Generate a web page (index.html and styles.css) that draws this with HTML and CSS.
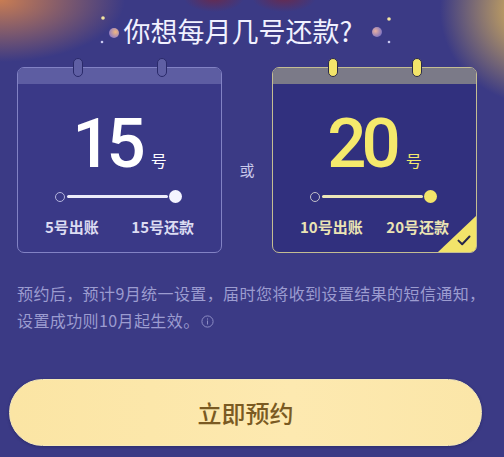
FILE: index.html
```html
<!DOCTYPE html>
<html lang="zh-CN">
<head>
    <meta charset="UTF-8">
    <meta name="viewport" content="width=device-width, initial-scale=1.0">
    <title>还款日设置</title>
    <link rel="stylesheet" href="styles.css">
</head>
<body>
    <div class="page">
        <div class="title">
            <svg class="deco" width="24" height="34" viewBox="0 0 24 34">
                <defs>
                    <radialGradient id="orbL" cx="0.65" cy="0.4" r="0.7">
                        <stop offset="0" stop-color="#f2b880"/>
                        <stop offset="1" stop-color="#8a78c8"/>
                    </radialGradient>
                </defs>
                <circle cx="5" cy="4" r="1.8" fill="#f4e6a0"/>
                <circle cx="16" cy="19" r="5" fill="url(#orbL)"/>
                <circle cx="4" cy="28" r="1.3" fill="#c8c8f0"/>
            </svg>
            <h1>你想每月几号还款?</h1>
            <svg class="deco" width="40" height="34" viewBox="0 0 40 34">
                <defs>
                    <radialGradient id="orbR" cx="0.35" cy="0.4" r="0.7">
                        <stop offset="0" stop-color="#e8b0a0"/>
                        <stop offset="1" stop-color="#7a70c0"/>
                    </radialGradient>
                </defs>
                <circle cx="35" cy="5" r="1.8" fill="#f4e6a0"/>
                <circle cx="23" cy="18" r="5" fill="url(#orbR)"/>
                <circle cx="35" cy="28" r="1.3" fill="#c8c8f0"/>
            </svg>
        </div>

        <div class="choices">
            <div class="card">
                <span class="ring ring-a"></span>
                <span class="ring ring-b"></span>
                <div class="card-head"></div>
                <div class="day"><span class="num">15</span><span class="unit">号</span></div>
                <div class="track"><span class="dot-open"></span><span class="bar"></span><span class="dot-full"></span></div>
                <div class="labels"><span>5号出账</span><span>15号还款</span></div>
            </div>

            <div class="or">或</div>

            <div class="card active">
                <span class="ring ring-a"></span>
                <span class="ring ring-b"></span>
                <div class="card-head"></div>
                <div class="day"><span class="num">20</span><span class="unit">号</span></div>
                <div class="track"><span class="dot-open"></span><span class="bar"></span><span class="dot-full"></span></div>
                <div class="labels"><span>10号出账</span><span>20号还款</span></div>
                <span class="picked">
                    <svg width="14" height="11" viewBox="0 0 14 11">
                        <path d="M1.5 5.6 L5.2 9.2 L12.5 1.5" fill="none" stroke="#26264a" stroke-width="2" stroke-linecap="round" stroke-linejoin="round"/>
                    </svg>
                </span>
            </div>
        </div>

        <p class="notice">预约后，预计9月统一设置，届时您将收到设置结果的短信通知，设置成功则10月起生效。<svg class="info" width="13" height="13" viewBox="0 0 13 13"><circle cx="6.5" cy="6.5" r="5.6" fill="none" stroke="#8d8dc4" stroke-width="1"/><rect x="6" y="5.5" width="1" height="4" fill="#8d8dc4"/><rect x="6" y="3.4" width="1" height="1.2" fill="#8d8dc4"/></svg></p>

        <button class="cta">立即预约</button>
    </div>
</body>
</html>
```

FILE: styles.css
```css
body {
    margin: 0;
    background: #3b3a85;
    font-family: "Noto Sans CJK SC", "Noto Sans", sans-serif;
}
.page {
    width: 504px;
    height: 457px;
    overflow: hidden;
    background:
        radial-gradient(ellipse 30px 14px at 214px -2px, rgba(110, 40, 70, 0.85), rgba(110, 40, 70, 0)),
        radial-gradient(ellipse 32px 14px at 284px -2px, rgba(110, 40, 70, 0.85), rgba(110, 40, 70, 0)),
        radial-gradient(ellipse 125px 62px at 0 0, rgba(208, 128, 80, 0.95), rgba(208, 128, 80, 0)),
        radial-gradient(ellipse 100px 95px at 540px 10px, rgba(200, 165, 95, 0.95) 30%, rgba(200, 165, 95, 0)),
        #3b3a85;
}

/* heading */
.title {
    display: flex;
    justify-content: center;
    align-items: center;
    gap: 2px;
    padding-top: 14px;
    padding-right: 12px;
}
.title h1 {
    margin: 0;
    font-size: 27px;
    line-height: 34px;
    font-weight: 400;
    color: #f1f1ff;
}
.deco { display: block; }

/* two calendar cards */
.choices {
    display: flex;
    padding: 19px 0 0 17px;
}
.card {
    position: relative;
    box-sizing: border-box;
    width: 205px;
    height: 186px;
    border: 1.5px solid #8282c4;
    border-radius: 7px;
    background: #3a3987;
}
.card-head {
    height: 16px;
    background: #5d5da2;
    border-radius: 5px 5px 0 0;
}
.ring {
    position: absolute;
    top: -10px;
    width: 8px;
    height: 17px;
    border-radius: 5px;
    border: 1.5px solid #2a2a6a;
    background: #5f5fa4;
}
.ring-a { left: 55px; }
.ring-b { left: 139px; }

.day {
    display: flex;
    justify-content: center;
    align-items: baseline;
    gap: 10px;
    margin-top: 25px;
    color: #ffffff;
}
.num {
    font-family: Roboto, "Noto Sans", sans-serif;
    font-size: 69px;
    line-height: 69px;
    font-weight: 500;
    letter-spacing: -5px;
}
.unit {
    font-size: 16px;
    line-height: 16px;
}

.track {
    display: flex;
    align-items: center;
    margin: 12px 39px 0 37px;
}
.dot-open {
    box-sizing: border-box;
    width: 10px;
    height: 10px;
    border-radius: 50%;
    border: 1.6px solid #b4b4dc;
}
.bar {
    flex: 1;
    height: 3px;
    margin: 0 1px 0 2px;
    background: #ececfa;
    border-radius: 2px;
}
.dot-full {
    width: 13px;
    height: 13px;
    border-radius: 50%;
    background: #f4f4ff;
}

.labels {
    display: flex;
    justify-content: space-between;
    margin: 14px 27px 0 27px;
    font-size: 15px;
    line-height: 20px;
    font-weight: 700;
    color: #dcdcf2;
}

/* selected card */
.card.active {
    border-color: #c4bd92;
    background: #31307e;
}
.card.active .card-head { background: #7b7a88; }
.card.active .ring {
    background: #f3e46a;
    border-color: #2a2a4a;
}
.card.active .day { color: #f5e96c; }
.card.active .dot-open { border-color: #c2c0c8; }
.card.active .bar { background: #ece6b8; }
.card.active .dot-full { background: #f3e46a; }
.card.active .labels { color: #ebe4b4; }

.picked {
    position: absolute;
    right: 0;
    bottom: 0;
    width: 38px;
    height: 36px;
    background: #f2e36a;
    border-bottom-right-radius: 5px;
    clip-path: polygon(100% 0, 100% 100%, 0 100%);
}
.picked svg {
    position: absolute;
    right: 5px;
    bottom: 6px;
}

.or {
    width: 50px;
    padding-top: 18px;
    align-self: center;
    text-align: center;
    font-size: 15px;
    color: #c8c8ea;
}

/* footnote */
.notice {
    margin: 27px 6px 0 17px;
    font-size: 16px;
    line-height: 27px;
    letter-spacing: 0.4px;
    color: #9c9cd0;
}
.info {
    margin-left: 1px;
    vertical-align: -1px;
}

/* main action */
.cta {
    display: block;
    width: 473px;
    height: 67px;
    margin: 45px 0 0 9px;
    border: 1px solid #f6eab8;
    border-radius: 34px;
    background: linear-gradient(90deg, #fbe5a4, #fde9b0 60%, #fbe6a8);
    box-shadow: 0 1px 3px rgba(20, 20, 60, 0.35);
    font-family: "Noto Sans CJK SC", sans-serif;
    font-size: 24px;
    font-weight: 500;
    color: #7a5a22;
}
```
